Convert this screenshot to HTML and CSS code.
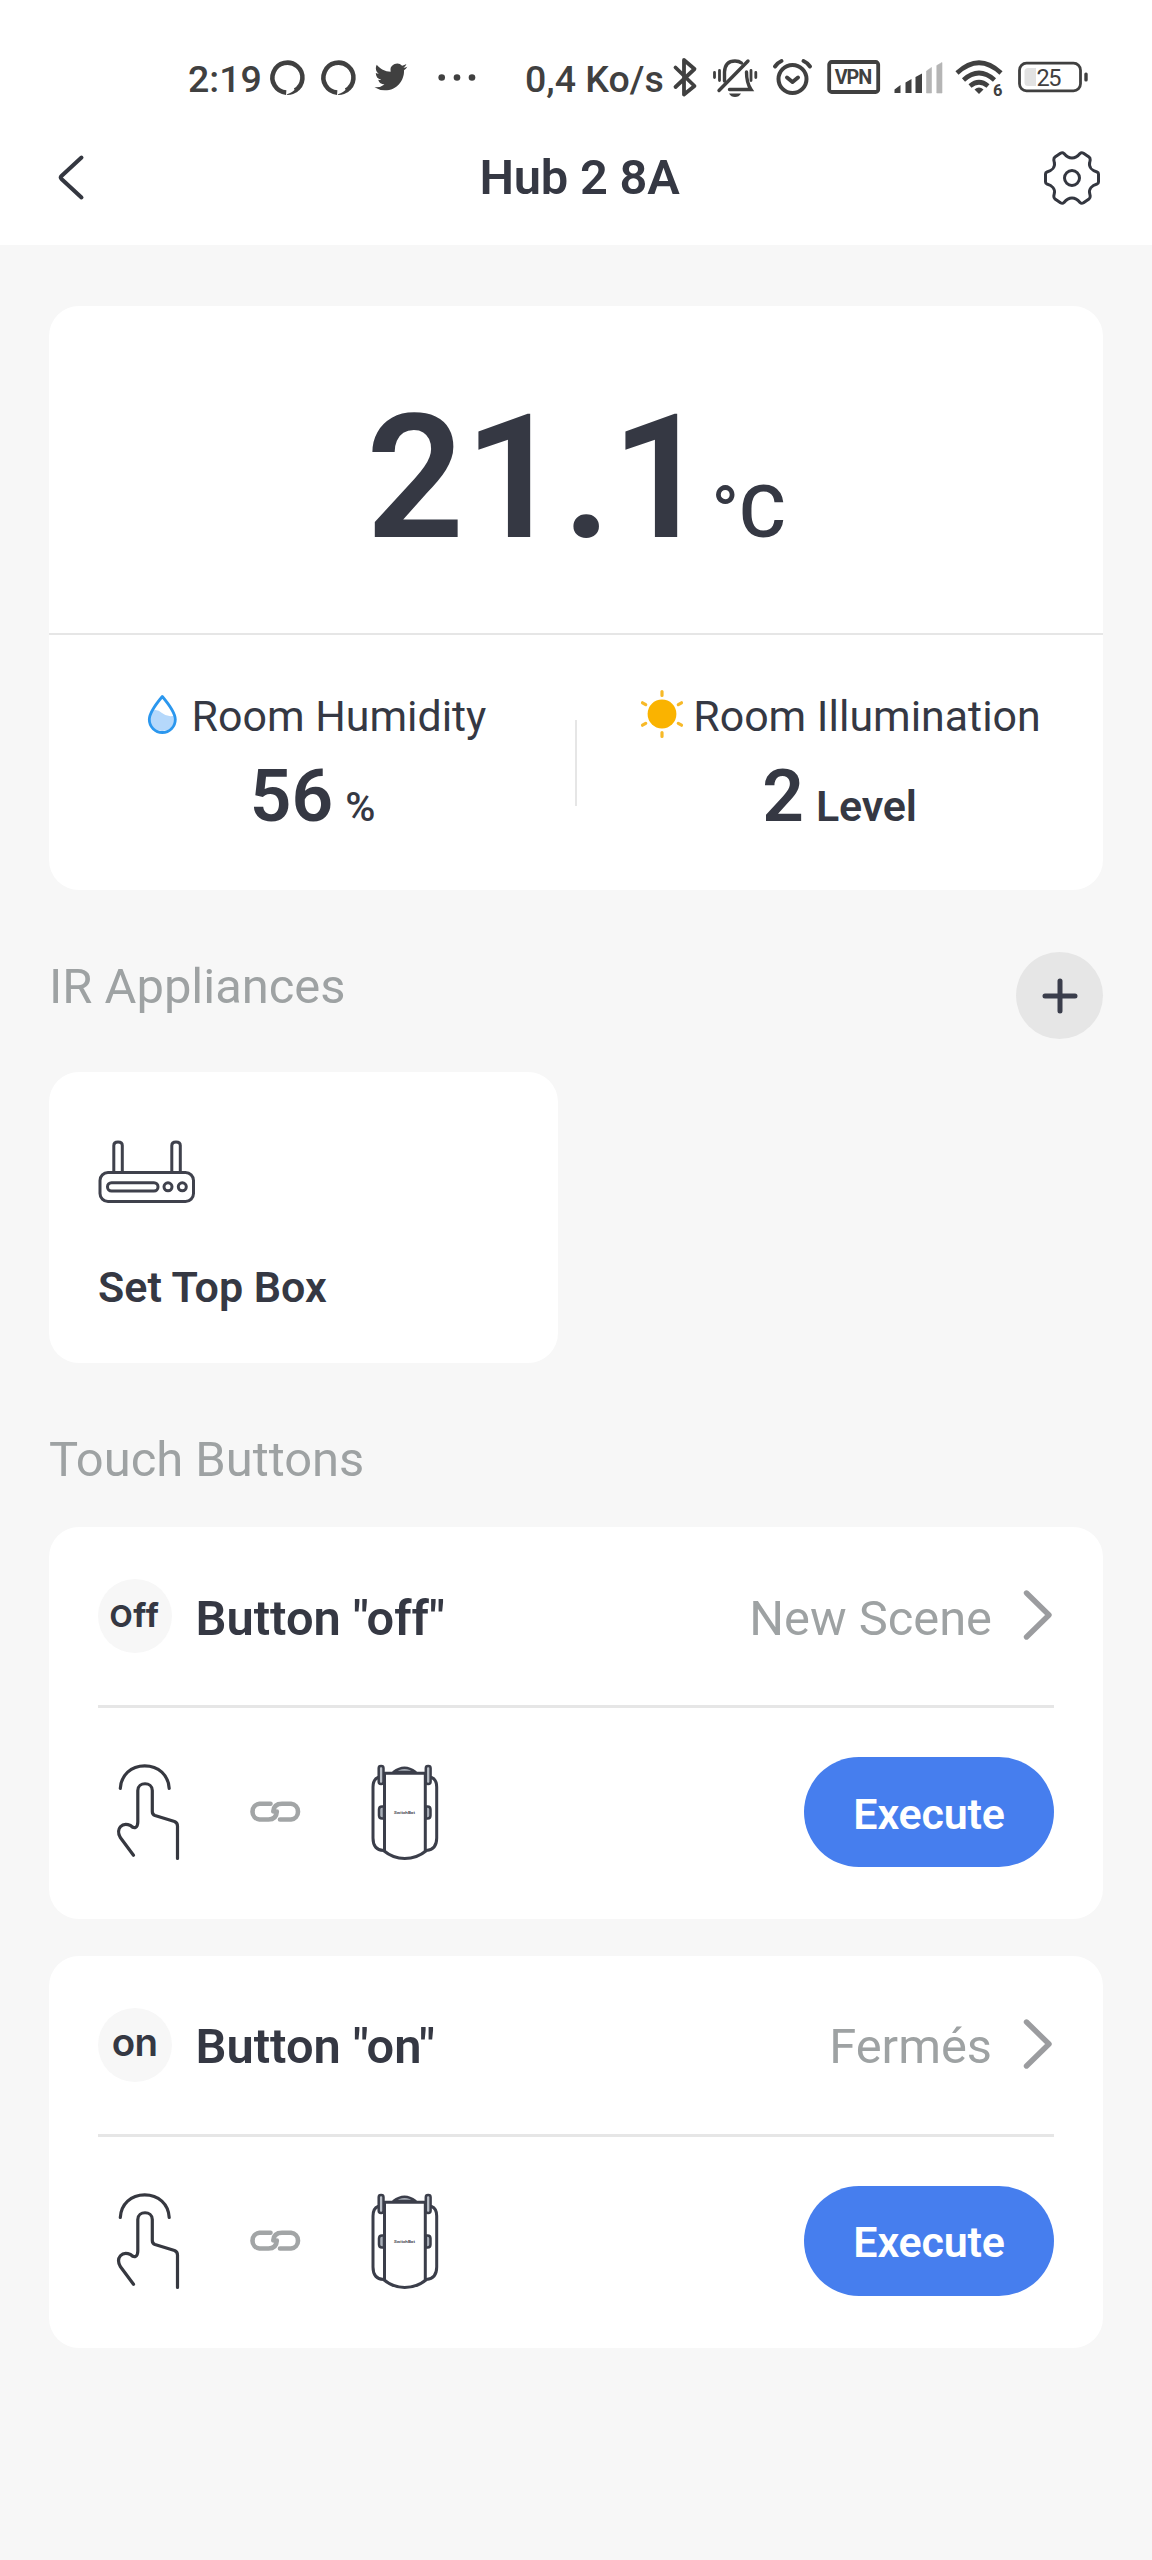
FILE: index.html
```html
<!DOCTYPE html>
<html lang="en">
<head>
<meta charset="utf-8">
<title>Hub 2 8A</title>
<link rel="stylesheet" href="styles.css">
</head>
<body>
<svg width="0" height="0" class="defs">
  <symbol id="ring" viewBox="268 56 40 44"><path d="M286.2 92.6A15 15 0 1 1 295 90.6" fill="none" stroke="#404040" stroke-width="4.6"/><path d="M286.5 94.6Q293 92.6 297 87L298 91Q293.500 95 287.500 95Z" fill="#404040"/></symbol>
  <symbol id="chevron" viewBox="0 0 32 56"><path d="M4.500 6L27 28L4.500 50" fill="none" stroke="#9b9c9f" stroke-width="5.400" stroke-linecap="round" stroke-linejoin="round"/></symbol>
  <symbol id="touch" viewBox="112 1760 72 104"><g fill="none" stroke="#363840" stroke-width="3.200" stroke-linecap="round" stroke-linejoin="round"><path d="M120.300 1788.500C121 1775 131 1765.800 144.700 1765.800C158.500 1765.800 168.500 1775 169.200 1788.500"/><path d="M133.500 1855.300L120.300 1837.500C115.500 1829 122 1821.500 130.500 1825.500C134.500 1829.500 137.800 1827.500 137.800 1822V1790.500C137.800 1781.500 152.300 1781.500 152.300 1790.500V1811.500Q152.300 1814.500 155 1815.500L174.500 1821.500Q177.500 1822.700 177.500 1826V1858.500"/></g></symbol>
  <symbol id="link" viewBox="248 1798 56 28"><g fill="none" stroke="#a2a5a6" stroke-width="4.600" stroke-linecap="round"><path d="M271.500 1803.800H260.500A7.900 7.900 0 0 0 260.500 1819.500H269.500Q277.300 1819.500 277.800 1811.500"/><path d="M281 1819.500H292A7.900 7.900 0 0 0 292 1803.800H283Q274.800 1803.800 274.300 1811.500"/></g></symbol>
  <symbol id="device" viewBox="368 1760 74 104"><g fill="none" stroke="#3b3e4a" stroke-width="3" stroke-linecap="round" stroke-linejoin="round"><path d="M384.500 1773.300H425.300V1850.500M384.500 1773.300V1850.500"/><path d="M393.500 1772Q404.500 1763.500 415.500 1772Z" fill="#a9afb8" stroke-width="2.500"/><path d="M378 1777.500Q373 1779.500 373 1787V1838Q373 1850 383.500 1850.500Q393 1858.500 404.700 1858.500Q417 1858.500 426.500 1850.500Q436.700 1849.500 436.700 1838V1787Q436.700 1779.500 431.500 1777.500"/><path d="M384 1806.500H382Q379 1806.500 379 1809.500V1815.500Q379 1818.500 382 1818.500H384ZM425.800 1806.500H427.500Q430.500 1806.500 430.500 1809.500V1815.500Q430.500 1818.500 427.500 1818.500H425.800Z" fill="#a9afb8" stroke-width="2.500"/><rect x="378.700" y="1766" width="4.800" height="18" rx="2.200" fill="#b9bec6" stroke-width="2.500"/><rect x="425.800" y="1766" width="4.800" height="18" rx="2.200" fill="#b9bec6" stroke-width="2.500"/></g><text x="394" y="1813.500" font-size="4" font-weight="600" textLength="21" lengthAdjust="spacingAndGlyphs" fill="#3b3e4a">SwitchBot</text></symbol>
</svg>

<header class="top">
  <div class="status">
    <span class="time">2:19</span>
    <svg class="i-ring"><use href="#ring"/></svg>
    <svg class="i-ring second"><use href="#ring"/></svg>
    <svg class="i-bird" viewBox="371 56 40 44"><path transform="translate(374.500 60.500) scale(1.370)" fill="#404040" d="M23.953 4.570a10 10 0 01-2.825.775 4.958 4.958 0 002.163-2.723c-.951.555-2.005.959-3.127 1.184a4.920 4.920 0 00-8.384 4.482C7.690 8.095 4.067 6.130 1.640 3.162a4.822 4.822 0 00-.666 2.475c0 1.710.870 3.213 2.188 4.096a4.904 4.904 0 01-2.228-.616v.060a4.923 4.923 0 003.946 4.827 4.996 4.996 0 01-2.212.085 4.936 4.936 0 004.604 3.417 9.867 9.867 0 01-6.102 2.105c-.390 0-.779-.023-1.170-.067a13.995 13.995 0 007.557 2.209c9.053 0 13.998-7.496 13.998-13.985 0-.210 0-.420-.015-.630A9.935 9.935 0 0024 4.590z"/></svg>
    <svg class="i-dots" viewBox="436 56 42 44" fill="#404040"><circle cx="441.700" cy="77.500" r="3.300"/><circle cx="457" cy="77.500" r="3.300"/><circle cx="472" cy="77.500" r="3.300"/></svg>
    <span class="net">0,4 Ko/s</span>
    <svg class="i-bt" viewBox="669 56 32 44"><path d="M675.500 67.500L694.500 86L684 94.500V60L694.500 69L675.500 87" fill="none" stroke="#404040" stroke-width="3.800" stroke-linecap="round" stroke-linejoin="round"/></svg>
    <svg class="i-bell" viewBox="711 56 48 44"><g fill="none" stroke="#404040" stroke-width="3.400" stroke-linecap="round"><path d="M719 90.500L748 61"/><path d="M724.500 81V72Q725 61 735 61Q739 61 741.500 63M746.500 72Q746.500 83 751 89.500H729.500"/><path d="M714.500 72.500V77.500M719.500 70.500V80.500M751 70.500V80.500M755.800 72.500V77.500" stroke-width="2.800"/></g><path d="M729 93.500H741Q739 97 735 97Q731 97 729 93.500Z" fill="#404040"/></svg>
    <svg class="i-alarm" viewBox="771 56 43 44"><g fill="none" stroke="#404040" stroke-width="4" stroke-linecap="round" stroke-linejoin="round"><circle cx="792.500" cy="79" r="14"/><path d="M787 77.500L792.500 82L798 77.500"/><path d="M775 66.500Q778 62.500 781.500 61M803.500 61Q807 62.500 810 66.500"/></g></svg>
    <svg class="i-vpn" viewBox="826 56 56 44"><rect x="829.200" y="62" width="49" height="30" rx="2.500" fill="none" stroke="#404040" stroke-width="3.800"/><text x="834.700" y="84.400" font-size="19.800" font-weight="700" textLength="37.500" fill="#404040">VPN</text></svg>
    <svg class="i-signal" viewBox="892 56 53 44"><g fill="#404040"><path d="M894.500 93V89.500L900.500 85V93ZM905.500 93V82.500L911.500 79V93ZM915.500 93V77L922 73.500V93Z"/></g><path d="M926.500 93V71L931.500 67.500V93ZM936.800 93V65.500L942 62.500V93Z" fill="#b5b5b5" stroke="#b5b5b5" stroke-width=".6" stroke-linejoin="round"/></svg>
    <svg class="i-wifi" viewBox="954 56 50 44"><g fill="none" stroke="#404040" stroke-width="4.600"><path d="M957 73Q979 52.500 1001 73"/><path d="M963.500 80Q979 66 994.500 80"/><path d="M970 86Q979 78.500 988 86"/></g><path d="M974.500 89.500Q979 85.500 983.500 89.500L979 94Z" fill="#404040"/><text x="993" y="95.500" font-size="16.500" font-weight="700" fill="#404040">6</text></svg>
    <svg class="i-battery" viewBox="1016 56 74 44"><rect x="1019.500" y="63.200" width="61" height="27.600" rx="7" fill="none" stroke="#404040" stroke-width="2.800"/><path d="M1036 68H1028Q1024.500 68 1024.500 71.500V82.500Q1024.500 86 1028 86H1036Z" fill="#e2e2e2"/><rect x="1084.300" y="72.500" width="3.400" height="9" rx="1.500" fill="#404040"/><text x="1036.500" y="86.300" font-size="23.500" font-weight="400" textLength="25" fill="#404040">25</text></svg>
  </div>
  <nav class="nav">
    <svg class="back" viewBox="54 152 34 52"><path d="M81.500 157.500L61.500 176Q60 177.500 61.500 179L81.500 197.500" fill="none" stroke="#343740" stroke-width="4" stroke-linecap="round"/></svg>
    <h1 class="title">Hub 2 8A</h1>
    <svg class="gear" viewBox="-30 -30 60 60"><g fill="none" stroke="#343740" stroke-width="3" stroke-linejoin="round"><circle r="7.500"/><path d="M26.500 -4Q26.500 -5.500 25 -6C20 -7.500 16.500 -11 17.700 -15.500L18.200 -18Q18.300 -20 17 -21L11.500 -24.800Q9.500 -26 8 -24.500C5 -20.800 2 -20 0 -20S-5 -20.800 -8 -24.500Q-9.500 -26 -11.500 -24.800L-17 -21Q-18.300 -20 -18.200 -18L-17.700 -15.500C-16.500 -11 -20 -7.500 -25 -6Q-26.500 -5.500 -26.500 -4V4Q-26.500 5.500 -25 6C-20 7.500 -16.500 11 -17.700 15.500L-18.200 18Q-18.300 20 -17 21L-11.500 24.800Q-9.500 26 -8 24.500C-5 20.800 -2 20 0 20S5 20.800 8 24.500Q9.500 26 11.500 24.800L17 21Q18.300 20 18.200 18L17.700 15.500C16.500 11 20 7.500 25 6Q26.500 5.500 26.500 4Z"/></g></svg>
  </nav>
</header>

<main class="content">
  <section class="card climate">
    <div class="temp"><span class="temp-value">21.1</span><span class="temp-unit">°C</span></div>
    <div class="metrics">
      <div class="metric">
        <div class="metric-label"><svg class="drop" viewBox="144 690 34 46"><path d="M161.300 695.500Q174.300 711 174.300 718.500A13 13 0 0 1 148.300 718.500Q148.300 711 161.300 695.500Z" fill="#fff"/><path d="M150 710Q156 707 161 712Q167 717 174 714.500V719A13 13 0 0 1 148.300 719Q148.300 714 150 710Z" fill="#b5d8fb"/><path d="M161.300 695.500Q174.300 711 174.300 718.500A13 13 0 0 1 148.300 718.500Q148.300 711 161.300 695.500Z" fill="none" stroke="#2b97ee" stroke-width="2.800" stroke-linejoin="round"/></svg><span>Room Humidity</span></div>
        <div class="metric-value"><b>56</b><span class="unit percent">%</span></div>
      </div>
      <div class="metric lux">
        <div class="metric-label"><svg class="sun" viewBox="-24 -26 48 52"><circle r="14.400" fill="#fab300"/><g stroke="#f7b928" stroke-width="3.200" stroke-linecap="round"><path d="M0 -22.500V-18.500M0 18.500V22.500M-19.500 -11.200L-16.300 -9.400M19.500 -11.200L16.300 -9.400M-19.500 11.200L-16.300 9.400M19.500 11.200L16.300 9.400"/></g></svg><span>Room Illumination</span></div>
        <div class="metric-value"><b>2</b><span class="unit">Level</span></div>
      </div>
    </div>
  </section>

  <div class="section-head ir-head">
    <h2>IR Appliances</h2>
    <button class="add" aria-label="Add"><svg viewBox="0 0 40 40"><path d="M20 5V35M5 20H35" stroke="#3a3d4b" stroke-width="5" stroke-linecap="round"/></svg></button>
  </div>
  <section class="card appliance">
    <svg class="router" viewBox="96 1136 102 70"><g fill="none" stroke="#3f414c" stroke-width="3"><rect x="100" y="1172.500" width="93.500" height="29" rx="8"/><path d="M113.800 1172V1145.500Q113.800 1142 118 1142Q122.300 1142 122.300 1145.500V1172M171.800 1172V1145.500Q171.800 1142 176 1142Q180.300 1142 180.300 1145.500V1172"/><rect x="107.500" y="1182.700" width="50.500" height="8.300" rx="4"/><circle cx="168" cy="1186.800" r="4"/><circle cx="182.300" cy="1186.800" r="4"/></g></svg>
    <h3>Set Top Box</h3>
  </section>

  <div class="section-head"><h2>Touch Buttons</h2></div>
  <section class="card touch">
    <div class="touch-head">
      <span class="badge off"><span>O</span>ff</span>
      <h3>Button "off"</h3>
      <span class="scene">New Scene</span>
      <svg class="chev"><use href="#chevron"/></svg>
    </div>
    <div class="touch-body">
      <svg class="i-touch"><use href="#touch"/></svg>
      <svg class="i-link"><use href="#link"/></svg>
      <svg class="i-device"><use href="#device"/></svg>
      <button class="execute">Execute</button>
    </div>
  </section>
  <section class="card touch">
    <div class="touch-head">
      <span class="badge on">on</span>
      <h3>Button "on"</h3>
      <span class="scene">Fermés</span>
      <svg class="chev"><use href="#chevron"/></svg>
    </div>
    <div class="touch-body">
      <svg class="i-touch"><use href="#touch"/></svg>
      <svg class="i-link"><use href="#link"/></svg>
      <svg class="i-device"><use href="#device"/></svg>
      <button class="execute">Execute</button>
    </div>
  </section>
</main>
</body>
</html>
```
FILE: styles.css
```css
* { box-sizing: border-box; margin: 0; padding: 0; }
body {
  width: 1152px;
  min-height: 2560px;
  background: #f7f7f7;
  color: #353843;
  font-family: Roboto, "Liberation Sans", sans-serif;
}
svg { display: block; flex: none; }
symbol { overflow: visible; }
.defs { position: absolute; }
button { border: 0; font-family: inherit; }

.top { height: 245px; background: #fff; }
.status {
  height: 110px;
  padding: 46px 0 0 188px;
  display: flex;
  align-items: center;
  color: #404040;
  font-size: 37.5px;
  font-weight: 500;
  white-space: nowrap;
}
.status svg { height: 44px; }
.time { width: 80px; padding-top: 2px; }
.i-ring { width: 40px; }
.i-ring.second { margin-left: 11px; }
.i-bird { width: 40px; margin-left: 12px; }
.i-dots { width: 42px; margin-left: 25px; }
.net { width: 144px; margin-left: 47px; padding-top: 2px; }
.i-bt { width: 32px; }
.i-bell { width: 48px; margin-left: 10px; }
.i-alarm { width: 43px; margin-left: 12px; }
.i-vpn { width: 56px; margin-left: 12px; }
.i-signal { width: 53px; margin-left: 10px; }
.i-wifi { width: 50px; margin-left: 9px; }
.i-battery { width: 74px; margin-left: 12px; }

.nav {
  height: 135px;
  padding: 0 50px 0 54px;
  display: flex;
  align-items: center;
  justify-content: space-between;
}
.back { width: 34px; height: 52px; }
.gear { width: 60px; height: 60px; }
.title { font-size: 48.8px; font-weight: 600; letter-spacing: -.2px; margin-left: 29px; }

.content { padding: 61px 49px 0; }
.card { background: #fff; border-radius: 30px; }

.climate { height: 584px; }
.temp {
  height: 327px;
  padding-top: 17px;
  display: flex;
  align-items: baseline;
  justify-content: center;
  line-height: 310px;
  font-weight: 500;
}
.temp-value { font-size: 172px; font-weight: 600; }
.temp-unit { font-size: 72px; margin-left: 2px; }
.metrics {
  height: 257px;
  border-top: 2px solid #e6e6e6;
  display: grid;
  grid-template-columns: 1fr 1fr;
  background: linear-gradient(#e6e6e6, #e6e6e6) center 85px / 2px 86px no-repeat;
}
.metric { padding-top: 55px; }
.metric-label {
  height: 52px;
  display: flex;
  align-items: center;
  justify-content: center;
  gap: 13px;
  font-size: 42.9px;
  line-height: 52px;
  padding-left: 6px;
}
.drop { width: 34px; height: 46px; margin-top: -4px; }
.sun { width: 48px; height: 52px; margin-top: -4px; }
.lux .metric-label { gap: 7px; padding-left: 0; }
.metric-value {
  display: flex;
  align-items: baseline;
  justify-content: center;
  gap: 12px;
  line-height: 80px;
  margin-top: 14px;
}
.metric-value b { font-size: 73px; font-weight: 600; }
.unit { font-size: 43px; font-weight: 600; letter-spacing: -.2px; }
.percent { font-size: 41px; font-weight: 500; }

.section-head h2 {
  color: #9ea2a3;
  font-size: 48.9px;
  font-weight: 400;
  line-height: 60px;
}
.ir-head {
  height: 182px;
  padding-top: 62px;
  display: flex;
  justify-content: space-between;
}
.ir-head h2 { margin-top: 5px; }
.add {
  width: 87px;
  height: 87px;
  border-radius: 50%;
  background: #e6e6e6;
  display: flex;
  align-items: center;
  justify-content: center;
}
.add svg { width: 40px; height: 40px; }

.appliance { width: 509px; height: 291px; padding: 64px 0 0 47px; }
.router { width: 102px; height: 70px; }
.appliance h3 { font-size: 43px; font-weight: 600; line-height: 52px; margin: 55px 0 0 2px; }

.section-head:not(.ir-head) { height: 164px; padding-top: 67px; }

.touch { height: 392px; padding: 0 49px 0 48.5px; margin-bottom: 36.5px; }
.touch-head {
  height: 181px;
  border-bottom: 3px solid #e6e6e6;
  display: flex;
  align-items: center;
}
.badge {
  width: 74px;
  height: 74px;
  border-radius: 50%;
  background: #f7f7f7;
  display: flex;
  align-items: baseline;
  justify-content: center;
  font-family: Inter, sans-serif;
  font-weight: 700;
}
.off { font-size: 33px; line-height: 72px; letter-spacing: .6px; }
.off span { font-size: 30px; }
.on { font-size: 38.5px; font-weight: 600; line-height: 69px; letter-spacing: -.8px; }
.touch-head h3 { font-size: 48.8px; font-weight: 600; margin: 4px 0 0 24px; }
.scene { margin: 4px 30px 0 auto; font-size: 48.8px; color: #9ea2a3; }
.chev { width: 32px; height: 56px; margin-bottom: 2px; }
.touch-body { height: 208px; display: flex; align-items: center; }
.i-touch { width: 72px; height: 104px; margin-left: 14.5px; }
.i-link { width: 56px; height: 28px; margin-left: 63px; }
.i-device { width: 74px; height: 104px; margin-left: 65px; }
.execute {
  width: 250px;
  height: 110px;
  margin-left: auto;
  padding-top: 3px;
  border-radius: 55px;
  background: #467eee;
  color: #fff;
  font-size: 43px;
  font-weight: 600;
  letter-spacing: -.2px;
}
```
